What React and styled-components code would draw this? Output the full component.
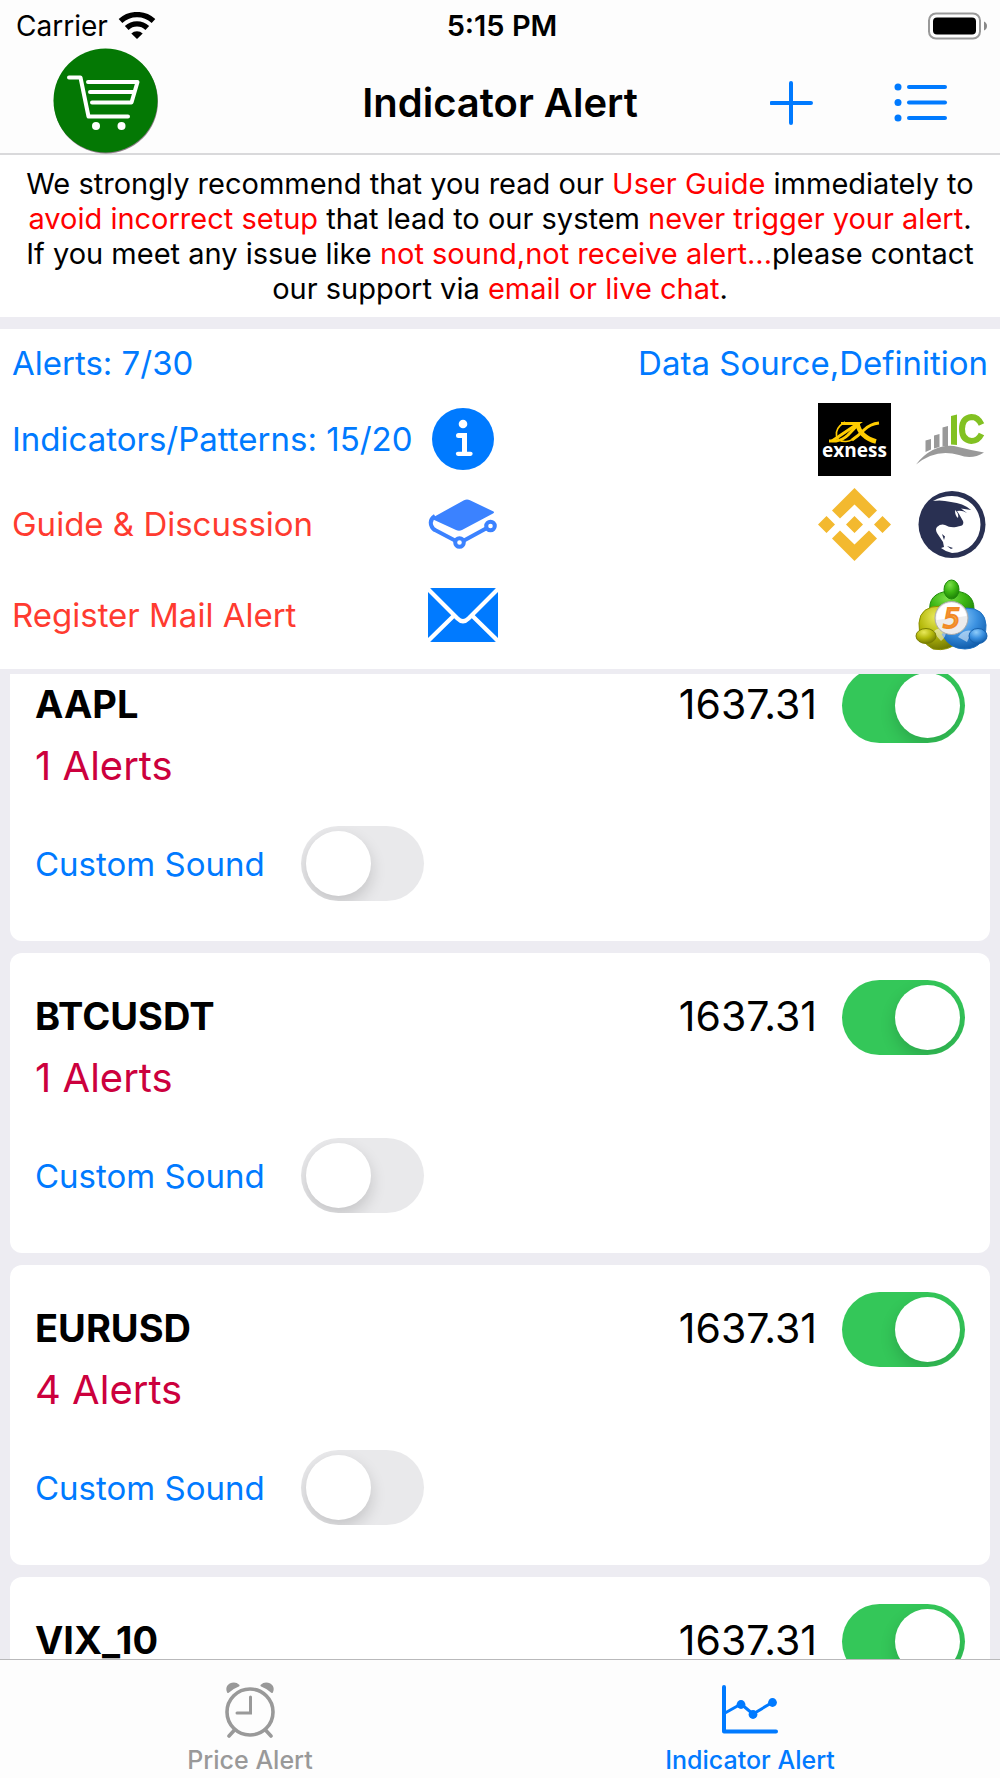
import React, { useId, useLayoutEffect, useRef, useState } from "react";
import styled, { createGlobalStyle } from "styled-components";

const blue = "#007aff";
const canvas = "#edecf2";
const hairline = "#d9d9db";

const GlobalStyle = createGlobalStyle`
  *, *::before, *::after { box-sizing: border-box; }
  body {
    margin: 0;
    background: ${canvas};
    color: #000;
    font-family: Inter, "Liberation Sans", sans-serif;
    font-optical-sizing: none;
  }
`;

const Screen = styled.div`
  display: flex;
  flex-direction: column;
  height: 100vh;
`;

const Header = styled.header`
  background: #fdfdfd;
  border-bottom: 2px solid ${hairline};
`;

const StatusBar = styled.div`
  display: grid;
  grid-template-columns: 1fr auto 1fr;
  align-items: center;
  height: 48px;
  padding: 4px 12px 0 16px;
  font-size: 28px;
  line-height: 34px;
`;

const Carrier = styled.div`
  display: flex;
  align-items: center;
  gap: 10px;
`;

const Clock = styled.time`
  font-size: 29px;
  font-weight: 600;
`;

const Battery = styled.svg`
  justify-self: end;
`;

const NavBar = styled.nav`
  display: grid;
  grid-template-columns: 1fr auto 1fr;
  align-items: center;
  height: 105px;
  padding: 2px 52px 0;
`;

const Title = styled.h1`
  margin: 0;
  font-size: 40px;
  line-height: 48px;
  font-weight: 600;
`;

const NavActions = styled.div`
  display: flex;
  justify-content: flex-end;
  gap: 80px;
`;

const IconButton = styled.button`
  display: flex;
  align-items: center;
  justify-content: center;
  justify-self: ${(p) => (p.$start ? "start" : "center")};
  padding: 0;
  border: 0;
  background: none;
  color: ${blue};
  cursor: pointer;
`;

const CartDrawing = styled.svg`
  overflow: visible;
`;

const Notice = styled.p`
  margin: 0;
  padding: 11px 22px;
  background: #fff;
  font-size: 29px;
  line-height: 35px;
  text-align: center;
`;

const Warn = styled.span`
  color: #f00;
`;

const WarnLink = styled.a`
  color: #f00;
  text-decoration: none;
`;

const Summary = styled.section`
  margin-top: 12px;
  padding: 0 12px 6px;
  background: #fff;
`;

const SummaryRow = styled.div`
  display: grid;
  grid-template-columns: 416px 70px 1fr;
  align-items: center;
  height: ${(p) => p.$height}px;
`;

const SummaryHead = styled.div`
  display: flex;
  align-items: center;
  justify-content: space-between;
  height: 68px;
`;

const SummaryText = styled.span`
  color: ${blue};
  font-size: 33px;
  line-height: 40px;
`;

const SummaryLink = styled.a`
  color: ${(p) => (p.$danger ? "#ff3b30" : blue)};
  font-size: 33px;
  line-height: 40px;
  text-decoration: none;
`;

const Logos = styled.div`
  display: flex;
  justify-content: flex-end;
  gap: 24px;
`;

const LogoLink = styled.a`
  display: flex;
`;

const List = styled.main`
  display: flex;
  flex: 1;
  flex-direction: column;
  gap: 12px;
  min-height: 0;
  margin-top: 5px;
  padding: 12px 10px;
  overflow-y: auto;
  scrollbar-width: none;
`;

const Card = styled.article`
  flex: none;
  padding: 27px 25px 40px;
  border-radius: 12px;
  background: #fff;
`;

const CardHead = styled.div`
  display: flex;
  align-items: flex-start;
  gap: 25px;
  line-height: 72px;
`;

const Symbol = styled.h2`
  flex: 1;
  margin: 0;
  font-size: 38px;
  font-weight: 700;
`;

const Price = styled.span`
  font-size: 41px;
`;

const AlertCount = styled.div`
  color: #cc003d;
  font-size: 40px;
  line-height: 46px;
`;

const SoundRow = styled.label`
  display: flex;
  align-items: center;
  gap: 36px;
  width: max-content;
  margin-top: 37px;
  color: ${blue};
  font-size: 33px;
  line-height: 40px;
`;

const Switch = styled.input`
  appearance: none;
  flex: none;
  display: flex;
  justify-content: flex-start;
  width: 123px;
  height: 75px;
  margin: 0;
  padding: 5px;
  border-radius: 38px;
  background: #e9e9eb;
  overflow: hidden;
  cursor: pointer;

  &::before {
    content: "";
    width: 65px;
    height: 65px;
    border-radius: 50%;
    background: #fff;
    box-shadow: 0 7px 16px rgba(0, 0, 0, 0.16);
  }

  &:checked {
    justify-content: flex-end;
    background: #34c759;
  }
`;

const TabBar = styled.nav`
  display: flex;
  height: 119px;
  border-top: 1px solid #b9b9bb;
  background: #fdfdfd;
`;

const Tab = styled.button`
  display: flex;
  flex: 1;
  flex-direction: column;
  align-items: center;
  gap: 6px;
  padding: 20px 0 0;
  border: 0;
  background: none;
  color: ${(p) => (p.$active ? blue : "#999")};
  font-family: inherit;
  font-size: 25px;
  font-weight: 500;
  line-height: 32px;
  cursor: pointer;
`;

const WifiIcon = () => (
  <svg width="38" height="28" viewBox="0 0 38 28" aria-hidden="true">
    <g fill="none" stroke="#000" strokeWidth="5.400">
      <path d="M2.500 9 A24.500 24.500 0 0 1 35.500 9" />
      <path d="M8.700 16 A15 15 0 0 1 29.300 16" />
    </g>
    <path d="M19 27 L13.300 21.600 A8 8 0 0 1 24.700 21.600 Z" />
  </svg>
);

const BatteryIcon = () => (
  <Battery width="60" height="28" viewBox="0 0 60 28" role="img" aria-label="Battery full">
    <rect x="1" y="1.500" width="51" height="25" rx="7" fill="none" stroke="#999" strokeWidth="2" />
    <rect x="5" y="5.500" width="43" height="17" rx="4" />
    <path d="M56 9.500 Q59 11 59 14 Q59 17 56 18.500 Z" fill="#888" />
  </Battery>
);

const CartIcon = () => (
  <CartDrawing width="106" height="106" viewBox="0 2 106 106" aria-hidden="true">
    <circle cx="54" cy="53.500" r="52" fill="#604858" opacity="0.7" />
    <circle cx="53.500" cy="52.500" r="52" fill="#047804" />
    <g fill="none" stroke="#fff" strokeWidth="4" strokeLinecap="round" strokeLinejoin="round">
      <path d="M17 29.500 H28.500 L36.500 68.500 H76" />
      <path d="M36 34 H85.500 L79.500 54.500 H40 M38 44 H81" />
    </g>
    <circle cx="44" cy="78" r="4" fill="#fff" />
    <circle cx="69.500" cy="78" r="4" fill="#fff" />
  </CartDrawing>
);

const PlusIcon = () => (
  <svg width="44" height="44" viewBox="0 0 44 44" aria-hidden="true">
    <path d="M21 2 V42 M1.500 22 H41" stroke="currentColor" strokeWidth="4" strokeLinecap="round" />
  </svg>
);

const ListIcon = () => (
  <svg width="54" height="44" viewBox="0 0 54 44" aria-hidden="true">
    {[6, 21.5, 37].map((y) => (
      <g key={y}>
        <circle cx="4" cy={y} r="3.500" fill="currentColor" />
        <path d={`M15 ${y} H51`} stroke="currentColor" strokeWidth="4" strokeLinecap="round" />
      </g>
    ))}
  </svg>
);

const InfoIcon = () => (
  <svg width="62" height="62" viewBox="0 0 62 62" aria-hidden="true">
    <circle cx="31" cy="31" r="31" fill="currentColor" />
    <circle cx="31" cy="16" r="4.300" fill="#fff" />
    <path d="M26.500 27.500 H32.500 V45.500" fill="none" stroke="#fff" strokeWidth="5" strokeLinecap="round" />
    <path d="M26 45.800 H38.500" stroke="#fff" strokeWidth="4.300" strokeLinecap="round" />
  </svg>
);

const BookIcon = () => (
  <svg width="70" height="50" viewBox="0 0 70 50" aria-hidden="true">
    <path
      d="M3 19.500 L36 1.200 Q39 -0.300 42 1.200 L65.500 12.500 Q67 13.500 65 14.500 L34 31 Q31 32.500 28 31 Z"
      fill="#3b82ff"
    />
    <g fill="none" stroke="#3b82ff" strokeWidth="4">
      <path d="M7 17 Q1 21 3.500 27 Q4.500 30 8 31.500 L27 41.500 M36 41.500 L58 29.500" />
      <circle cx="31.500" cy="43.500" r="4.300" />
      <circle cx="62.500" cy="27" r="4.300" />
    </g>
  </svg>
);

const MailIcon = () => (
  <svg width="70" height="54" viewBox="0 0 70 54" aria-hidden="true">
    <rect width="70" height="54" rx="4" fill="currentColor" />
    <path
      d="M-2 -1 L29.500 30.500 Q35 36 40.500 30.500 L72 -1 M-2 55 L26 27.500 M72 55 L44 27.500"
      fill="none"
      stroke="#fff"
      strokeWidth="4.200"
    />
  </svg>
);

const ExnessLogo = () => (
  <svg width="73" height="73" viewBox="0 0 73 73" aria-hidden="true">
    <rect width="73" height="73" fill="#000" />
    <g fill="none" stroke="#fc0">
      <path d="M23 20.500 H40 L14 38" strokeWidth="3" />
      <path d="M11 38 H18 Q25 37 30 32 L41 20.500" strokeWidth="3" />
      <path d="M27 19 Q17 25 18.500 33 Q20 39 28 38.500 Q34 38 40 32.500" strokeWidth="1.600" />
      <path d="M39.500 21 Q42 34 58 38.500" strokeWidth="4.500" />
      <path d="M34 37 Q40 33 46 27 Q52 21 61 20" strokeWidth="3" />
    </g>
    <text
      x="36.500"
      y="53.500"
      fill="#fff"
      textAnchor="middle"
      fontFamily="'Open Sans', sans-serif"
      fontSize="19"
      fontWeight="700"
    >
      exness
    </text>
  </svg>
);

const IcLogo = () => (
  <svg width="73" height="73" viewBox="3 0 73 73" overflow="visible" aria-hidden="true">
    <g fill="#999">
      <path d="M13.500 37.500 L19 36 V46.500 L13.500 49 Z M22 32.500 L27.500 31 V44 L22 45.500 Z M30.500 24.500 L36 23 V43 L30.500 43.500 Z" />
      <path d="M4 61.500 Q20 41 42 43 Q58 47 72 49.500 Q60 57 47 52 Q24 45 4 61.500 Z" />
    </g>
    <path d="M39 13 L45 11.500 V42 L39 41.500 Z" fill="#82c122" />
    <path
      d="M69.500 21.500 Q66 14 59.500 14 Q50 15 50 26 Q50 37 59.500 38 Q66 38 69.500 31"
      fill="none"
      stroke="#82c122"
      strokeWidth="6"
    />
  </svg>
);

const BinanceLogo = () => (
  <svg width="73" height="73" viewBox="0 0 73 73" fill="#f3b92f" aria-hidden="true">
    <path d="M36.500 0 L59 22.500 L51 30.500 L36.500 16.500 L22 30.500 L14 22.500 Z" />
    <path d="M36.500 73 L59 50.500 L51 42.500 L36.500 56.500 L22 42.500 L14 50.500 Z" />
    <path d="M36.500 28 L45 36.500 L36.500 45 L28 36.500 Z M8.500 28 L17 36.500 L8.500 45 L0 36.500 Z M64.500 28 L73 36.500 L64.500 45 L56 36.500 Z" />
  </svg>
);

const BullLogo = () => (
  <svg width="73" height="73" viewBox="0 0 73 73" aria-hidden="true">
    <circle cx="37" cy="36.500" r="33.500" fill="#293052" />
    <path
      d="M18 13 Q27 8 37 8 A28.500 28.500 0 0 1 37 65 Q31 64 26 60 L29 59 L28 54 L22 45 Q20 41 22 39 Q26 35.500 30 37 Q35 40 41 39 L47 37.500 Q49 36 48 33 L44 26 L42 23 Q47 22 52 25 L46 20.500 L56 22 Q48 15 36 14 Q26 11.500 18 13 Z"
      fill="#fff"
    />
    <path d="M40 22 Q44 25 43 30 Q40 28 40 22 Z" fill="#fff" />
    <path d="M27 46 L30 48.500 L29 52 Z M32 58 L38 60 L36 61 Z" fill="#293052" />
  </svg>
);

const MetaTraderLogo = () => {
  const id = useId();
  const ball = (name, light, mid, dark) => (
    <radialGradient id={`${id}${name}`} cx="0.4" cy="0.25" r="0.8">
      <stop offset="0" stopColor={light} />
      <stop offset="0.5" stopColor={mid} />
      <stop offset="1" stopColor={dark} />
    </radialGradient>
  );
  return (
    <svg width="73" height="73" viewBox="0 0 73 73" aria-hidden="true">
      <defs>
        {ball("g", "#7be04a", "#3bb512", "#1a7a05")}
        {ball("y", "#e9e95a", "#b5b90c", "#6c7200")}
        {ball("b", "#8fcdfb", "#3a90e0", "#0b56a4")}
      </defs>
      <path d="M15 34 Q12 14 34 12 Q59 11 59 30 Q59 36 54 42 L20 42 Z" fill={`url(#${id}g)`} stroke="#1f8a0b" />
      <path d="M26 27 Q5 27 4 44 Q3 62 18 70 Q34 73 44 62 L44 54 L30 50 Z" fill={`url(#${id}y)`} stroke="#8b9000" />
      <path d="M51 29 Q70 29 71 46 Q71 69 50 70 Q34 70 27 55 L44 54 Z" fill={`url(#${id}b)`} stroke="#1c6fc0" />
      <path d="M18 53 Q24 46 31 53 Q31 58 26 62 Z M43 58 Q49 50 57 52 L52 63 Z" fill="#fff" opacity="0.5" />
      <ellipse cx="36.500" cy="10.500" rx="7.500" ry="9.500" fill={`url(#${id}g)`} stroke="#1f8a0b" />
      <ellipse cx="11" cy="57" rx="10" ry="7.500" fill={`url(#${id}y)`} stroke="#7a7f00" />
      <ellipse cx="63" cy="57" rx="9" ry="7.500" fill={`url(#${id}b)`} stroke="#1560ad" />
      <circle cx="36.500" cy="39" r="16.500" fill="#ececec" stroke="#aaa" />
      <path d="M21.500 41 A15 15 0 1 1 51.500 37 Z" fill="#fff" />
      <text
        x="36.500"
        y="49"
        fill="#ffb06a"
        stroke="#f18a25"
        textAnchor="middle"
        fontFamily="'DejaVu Sans', sans-serif"
        fontSize="27"
        fontWeight="400"
        fontStyle="italic"
        strokeWidth="2"
      >
        5
      </text>
    </svg>
  );
};

const AlarmIcon = () => (
  <svg width="56" height="58" viewBox="0 0 56 58" aria-hidden="true">
    <circle cx="28" cy="32" r="23" fill="none" stroke="currentColor" strokeWidth="3.600" />
    <path d="M28.500 17 V33 H15" fill="none" stroke="currentColor" strokeWidth="3" strokeLinecap="round" />
    <path d="M12.500 50 L7 56 M43.500 50 L49 56" stroke="currentColor" strokeWidth="3.600" strokeLinecap="round" />
    <path
      d="M6 12 Q4 7 8 4.500 Q13 2 16.500 5.500 Q10 8 6 12 Z M50 12 Q52 7 48 4.500 Q43 2 39.500 5.500 Q46 8 50 12 Z"
      fill="currentColor"
      stroke="currentColor"
      strokeWidth="2"
      strokeLinejoin="round"
    />
  </svg>
);

const ChartIcon = () => (
  <svg width="56" height="58" viewBox="0 0 56 58" aria-hidden="true">
    <g fill="none" stroke="currentColor" strokeLinecap="round" strokeLinejoin="round">
      <path d="M2 7 V51.500 H54" strokeWidth="4" />
      <path d="M3 33 L19 24 L31 34 L51 22" strokeWidth="3" />
    </g>
    <g fill="currentColor">
      <circle cx="19" cy="24.500" r="4.400" />
      <circle cx="31" cy="34.500" r="4.400" />
      <circle cx="50.500" cy="22.500" r="4.400" />
    </g>
  </svg>
);

const instruments = [
  { symbol: "AAPL", alerts: 1, price: "1637.31" },
  { symbol: "BTCUSDT", alerts: 1, price: "1637.31" },
  { symbol: "EURUSD", alerts: 4, price: "1637.31" },
  { symbol: "VIX_10", alerts: 1, price: "1637.31" },
];

const initialScroll = 45;

function InstrumentCard({ symbol, alerts, price }) {
  const [enabled, setEnabled] = useState(true);
  const [sound, setSound] = useState(false);
  return (
    <Card>
      <CardHead>
        <Symbol>{symbol}</Symbol>
        <Price>{price}</Price>
        <Switch
          type="checkbox"
          role="switch"
          aria-label={`${symbol} alerts`}
          checked={enabled}
          onChange={(e) => setEnabled(e.target.checked)}
        />
      </CardHead>
      <AlertCount>{alerts} Alerts</AlertCount>
      <SoundRow>
        Custom Sound
        <Switch type="checkbox" role="switch" checked={sound} onChange={(e) => setSound(e.target.checked)} />
      </SoundRow>
    </Card>
  );
}

export default function App() {
  const listRef = useRef(null);
  const [tab, setTab] = useState("indicator");

  useLayoutEffect(() => {
    listRef.current.scrollTop = initialScroll;
  }, []);

  return (
    <Screen>
      <GlobalStyle />
      <Header>
        <StatusBar>
          <Carrier>
            Carrier
            <WifiIcon />
          </Carrier>
          <Clock>5:15 PM</Clock>
          <BatteryIcon />
        </StatusBar>
        <NavBar>
          <IconButton $start aria-label="Store">
            <CartIcon />
          </IconButton>
          <Title>Indicator Alert</Title>
          <NavActions>
            <IconButton aria-label="Add alert">
              <PlusIcon />
            </IconButton>
            <IconButton aria-label="Menu">
              <ListIcon />
            </IconButton>
          </NavActions>
        </NavBar>
      </Header>

      <Notice>
        We strongly recommend that you read our <WarnLink href="#guide">User Guide</WarnLink> immediately to{" "}
        <Warn>avoid incorrect setup</Warn> that lead to our system <Warn>never trigger your alert</Warn>. If you
        meet any issue like <Warn>not sound,not receive alert...</Warn>please contact our support via{" "}
        <WarnLink href="#support">email or live chat</WarnLink>.
      </Notice>

      <Summary>
        <SummaryHead>
          <SummaryText>Alerts: 7/30</SummaryText>
          <SummaryLink href="#sources">Data Source,Definition</SummaryLink>
        </SummaryHead>
        <SummaryRow $height={84}>
          <SummaryText>Indicators/Patterns: 15/20</SummaryText>
          <IconButton aria-label="About indicators">
            <InfoIcon />
          </IconButton>
          <Logos>
            <LogoLink href="#exness" aria-label="Exness"><ExnessLogo /></LogoLink>
            <LogoLink href="#icmarkets" aria-label="IC Markets"><IcLogo /></LogoLink>
          </Logos>
        </SummaryRow>
        <SummaryRow $height={86}>
          <SummaryLink $danger href="#guide">Guide &amp; Discussion</SummaryLink>
          <IconButton aria-label="Open guide">
            <BookIcon />
          </IconButton>
          <Logos>
            <LogoLink href="#binance" aria-label="Binance"><BinanceLogo /></LogoLink>
            <LogoLink href="#blackbull" aria-label="BlackBull"><BullLogo /></LogoLink>
          </Logos>
        </SummaryRow>
        <SummaryRow $height={96}>
          <SummaryLink $danger href="#mail">Register Mail Alert</SummaryLink>
          <IconButton aria-label="Register mail">
            <MailIcon />
          </IconButton>
          <Logos>
            <LogoLink href="#metatrader" aria-label="MetaTrader 5"><MetaTraderLogo /></LogoLink>
          </Logos>
        </SummaryRow>
      </Summary>

      <List ref={listRef}>
        {instruments.map((item) => (
          <InstrumentCard key={item.symbol} {...item} />
        ))}
      </List>

      <TabBar>
        <Tab $active={tab === "price"} onClick={() => setTab("price")}>
          <AlarmIcon />
          Price Alert
        </Tab>
        <Tab $active={tab === "indicator"} onClick={() => setTab("indicator")}>
          <ChartIcon />
          Indicator Alert
        </Tab>
      </TabBar>
    </Screen>
  );
}
